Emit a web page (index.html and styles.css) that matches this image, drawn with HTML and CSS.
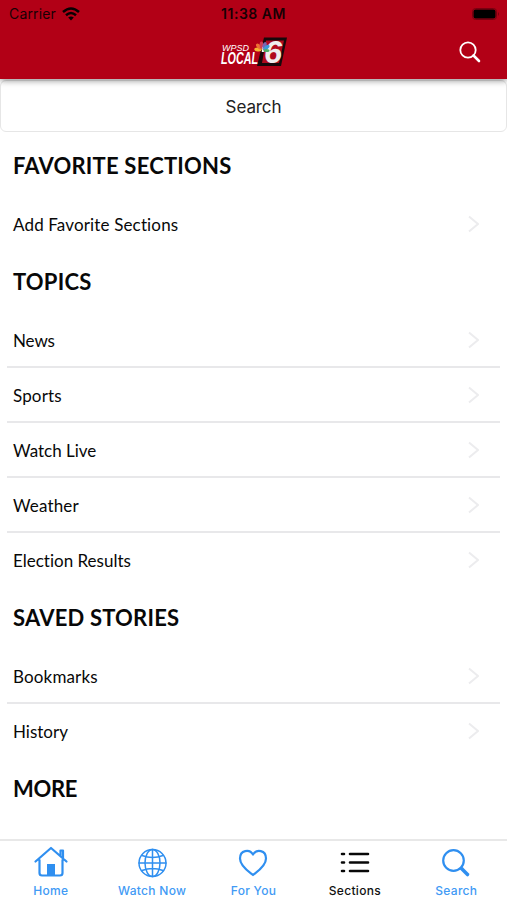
FILE: index.html
```
<!DOCTYPE html>
<html lang="en">
    <head>
        <meta charset="utf-8">
        <title>Sections</title>
        <link rel="stylesheet" href="styles.css">
    </head>
    <body>
        <header class="header">
            <div class="status">
                <div class="carrier">
                    <span>Carrier</span>
                    <svg width="18" height="14" viewBox="0 0 18 14">
                        <g fill="none" stroke="#080002" stroke-width="2.5">
                            <path d="M1 5Q9 -2 17 5"/>
                            <path d="M4 8.2Q9 3.8 14 8.2"/>
                        </g>
                        <path d="M6.2 10.5Q9 8.3 11.8 10.5L9 13.6Z" fill="#080002"/>
                    </svg>
                </div>
                <div class="time">11:38 AM</div>
                <div class="battery">
                    <svg width="28" height="12" viewBox="0 0 28 12">
                        <rect x="0.5" y="0.5" width="24" height="11" rx="3" fill="none" stroke="#780010"/>
                        <rect x="1.5" y="1.5" width="22" height="9" rx="2" fill="#000"/>
                        <path d="M26 4Q28 6 26 8Z" fill="#780010"/>
                    </svg>
                </div>
            </div>
            <div class="brand">
                <svg class="logo" width="68" height="32" viewBox="0 0 68 32">
                    <path d="M44 1.5H67L61 30H37Z" fill="#17080b"/>
                    <path d="M46 4.5H64L59 27H42Z" fill="#b00a1d"/>
                    <text class="logo_top" x="2" y="15" textLength="27" lengthAdjust="spacingAndGlyphs">WPSD</text>
                    <text class="logo_main" x="1" y="27.5" textLength="37" lengthAdjust="spacingAndGlyphs">LOCAL</text>
                    <text class="logo_six" x="44" y="27" textLength="18" lengthAdjust="spacingAndGlyphs">6</text>
                    <g>
                        <ellipse cx="38" cy="13.5" rx="3.8" ry="1.9" fill="#f2b632" transform="rotate(5 38 13.5)"/>
                        <ellipse cx="39" cy="10.5" rx="3.6" ry="1.9" fill="#ee7134" transform="rotate(42 39 10.5)"/>
                        <ellipse cx="41.5" cy="9" rx="1.9" ry="3.5" fill="#d23f50"/>
                        <ellipse cx="44.5" cy="9.5" rx="1.9" ry="3.5" fill="#7d64b0" transform="rotate(20 44.5 9.5)"/>
                        <ellipse cx="46.5" cy="11.5" rx="3.5" ry="1.9" fill="#3d9ad8" transform="rotate(-38 46.5 11.5)"/>
                        <ellipse cx="46.5" cy="14.5" rx="3" ry="1.6" fill="#4cad65"/>
                    </g>
                    <path d="M42.7 10.5L44 16H41.7Z" fill="#fff"/>
                </svg>
                <svg class="find" width="24" height="24" viewBox="0 0 24 24">
                    <circle cx="10" cy="10" r="7.7" fill="none" stroke="#fff" stroke-width="1.8"/>
                    <path d="M15.5 15.5L21 21" stroke="#fff" stroke-width="2.6" stroke-linecap="round"/>
                </svg>
            </div>
        </header>

        <div class="search_box">Search</div>

        <main class="sections">
            <h2>FAVORITE SECTIONS</h2>
            <ul>
                <li><span class="wide">Add Favorite Sections</span><svg class="arrow" viewBox="0 0 12 18"><path d="M2 1.5L11 9L2 16.5"/></svg></li>
            </ul>
            <h2>TOPICS</h2>
            <ul>
                <li><span class="tight">News</span><svg class="arrow" viewBox="0 0 12 18"><path d="M2 1.5L11 9L2 16.5"/></svg></li>
                <li><span class="wide">Sports</span><svg class="arrow" viewBox="0 0 12 18"><path d="M2 1.5L11 9L2 16.5"/></svg></li>
                <li><span>Watch Live</span><svg class="arrow" viewBox="0 0 12 18"><path d="M2 1.5L11 9L2 16.5"/></svg></li>
                <li><span class="wide">Weather</span><svg class="arrow" viewBox="0 0 12 18"><path d="M2 1.5L11 9L2 16.5"/></svg></li>
                <li><span>Election Results</span><svg class="arrow" viewBox="0 0 12 18"><path d="M2 1.5L11 9L2 16.5"/></svg></li>
            </ul>
            <h2>SAVED STORIES</h2>
            <ul>
                <li><span class="wide">Bookmarks</span><svg class="arrow" viewBox="0 0 12 18"><path d="M2 1.5L11 9L2 16.5"/></svg></li>
                <li><span>History</span><svg class="arrow" viewBox="0 0 12 18"><path d="M2 1.5L11 9L2 16.5"/></svg></li>
            </ul>
            <h2 class="more">MORE</h2>
        </main>

        <nav class="tabs">
            <div class="tab">
                <svg width="36" height="32" viewBox="0 0 36 32">
                    <path d="M2.5 15.5L18 2L33.5 15.5M27.5 10V4.5H30V12.5M6.5 14V27Q6.5 29.5 9 29.5H27Q29.5 29.5 29.5 27V14"/>
                    <path class="solid" d="M14 18H22V30H14Z"/>
                </svg>
                <span>Home</span>
            </div>
            <div class="tab">
                <svg class="globe" width="36" height="32" viewBox="0 0 36 32">
                    <circle cx="18.5" cy="17" r="13.5"/>
                    <ellipse cx="18.5" cy="17" rx="7.5" ry="13.5"/>
                    <path d="M18.5 3.5V30.5M5 17H32M8 9.5Q18.5 13.5 29 9.5M8 24.5Q18.5 20.5 29 24.5"/>
                </svg>
                <span>Watch Now</span>
            </div>
            <div class="tab">
                <svg width="36" height="32" viewBox="0 0 36 32">
                    <path d="M18 29C15 26.5 5 20.5 5 12.5C5 4 14.5 2.5 18 8.5C21.5 2.5 31 4 31 12.5C31 20.5 21 26.5 18 29Z"/>
                </svg>
                <span>For You</span>
            </div>
            <div class="tab active">
                <svg class="list" width="36" height="32" viewBox="0 0 36 32">
                    <path d="M5 8H7M13 8H31M5 16.5H7M13 16.5H31M5 25H7M13 25H31"/>
                </svg>
                <span>Sections</span>
            </div>
            <div class="tab">
                <svg width="36" height="32" viewBox="0 0 36 32">
                    <circle cx="15.5" cy="14.5" r="10.3"/>
                    <path class="handle" d="M23.5 22.5L29.5 28.5"/>
                </svg>
                <span>Search</span>
            </div>
        </nav>
    </body>
</html>
```
FILE: styles.css
```
*{
    box-sizing: border-box;
}
body{
    margin: 0; height: 900px; display: flex; flex-direction: column; overflow: hidden;
    background-color: #fff; color: #080808; font-family: Inter, "Liberation Sans", sans-serif;
}
.header{
    height: 79px; flex: none; background-color: #b20016; box-shadow: 0 1px 7px rgba(0, 0, 0, 0.5);
    z-index: 1;
}
.status, .brand{
    display: grid; grid-template-columns: 1fr auto 1fr; align-items: center;
}
.status{
    height: 27px; color: #180004; font-size: 14px;
}
.carrier{
    display: flex; align-items: center; gap: 6px; padding-left: 9px; letter-spacing: 0.15px;
}
.time{
    font-weight: 600; letter-spacing: 0.5px;
}
.battery{
    display: flex; justify-content: flex-end; padding-right: 7px;
}
.brand{
    height: 50px;
}
.logo{
    grid-column: 2; overflow: visible;
}
.logo text{
    fill: #fff; font-family: "Liberation Sans", sans-serif; font-style: italic;
}
.logo .logo_top{
    font-size: 8.5px;
}
.logo .logo_main{
    font-size: 16px; font-weight: bold;
}
.logo .logo_six{
    font-size: 31px; font-weight: bold; fill: #eee;
}
.find{
    justify-self: end; margin-right: 25px;
}
.search_box{
    height: 52px; flex: none; margin-top: 1px; border: 1px solid #e6e6e6; border-radius: 6px;
    font-size: 17px; line-height: 52px; text-align: center; color: #222; letter-spacing: -0.1px;
}
.sections{
    flex: 1; min-height: 0; overflow: hidden; padding: 4px 7px 0;
    font-family: Lato, sans-serif; font-variant-ligatures: none;
}
h2{
    display: flex; align-items: center; height: 61px; margin: 0; padding: 0 6px 2px;
    font-size: 22px; font-weight: bold; letter-spacing: 0.2px;
}
.more{
    letter-spacing: -0.3px;
}
ul{
    margin: 0; padding: 0; list-style: none;
}
li{
    display: flex; align-items: center; justify-content: space-between; height: 55px;
    border-bottom: 2px solid #e8e8ea; padding: 1px 21px 0 6px; font-size: 17px;
}
li:last-child{
    border-color: transparent;
}
.tight{
    letter-spacing: -0.1px;
}
.wide{
    letter-spacing: 0.15px;
}
.arrow{
    width: 12px; height: 18px; fill: none; stroke: #ececee; stroke-width: 2;
}
.tabs{
    display: grid; grid-template-columns: repeat(5, 1fr); height: 61px; flex: none;
    border-top: 2px solid #e8e8e8; background-color: #fff;
}
.tab{
    display: flex; flex-direction: column; align-items: center; gap: 4px; padding-top: 5px;
    color: #419af5; font-size: 12px; font-weight: 500; line-height: 18px; letter-spacing: 0.3px;
}
.tab svg{
    fill: none; stroke: #2f8ff0; stroke-width: 2.2; stroke-linecap: round; stroke-linejoin: round;
}
.tab .solid{
    fill: #2f8ff0; stroke: none;
}
.tab .globe{
    stroke-width: 1.5;
}
.tab .handle{
    stroke-width: 3.6;
}
.active{
    color: #111;
}
.active .list{
    stroke: #080808; stroke-width: 2.6;
}
```
